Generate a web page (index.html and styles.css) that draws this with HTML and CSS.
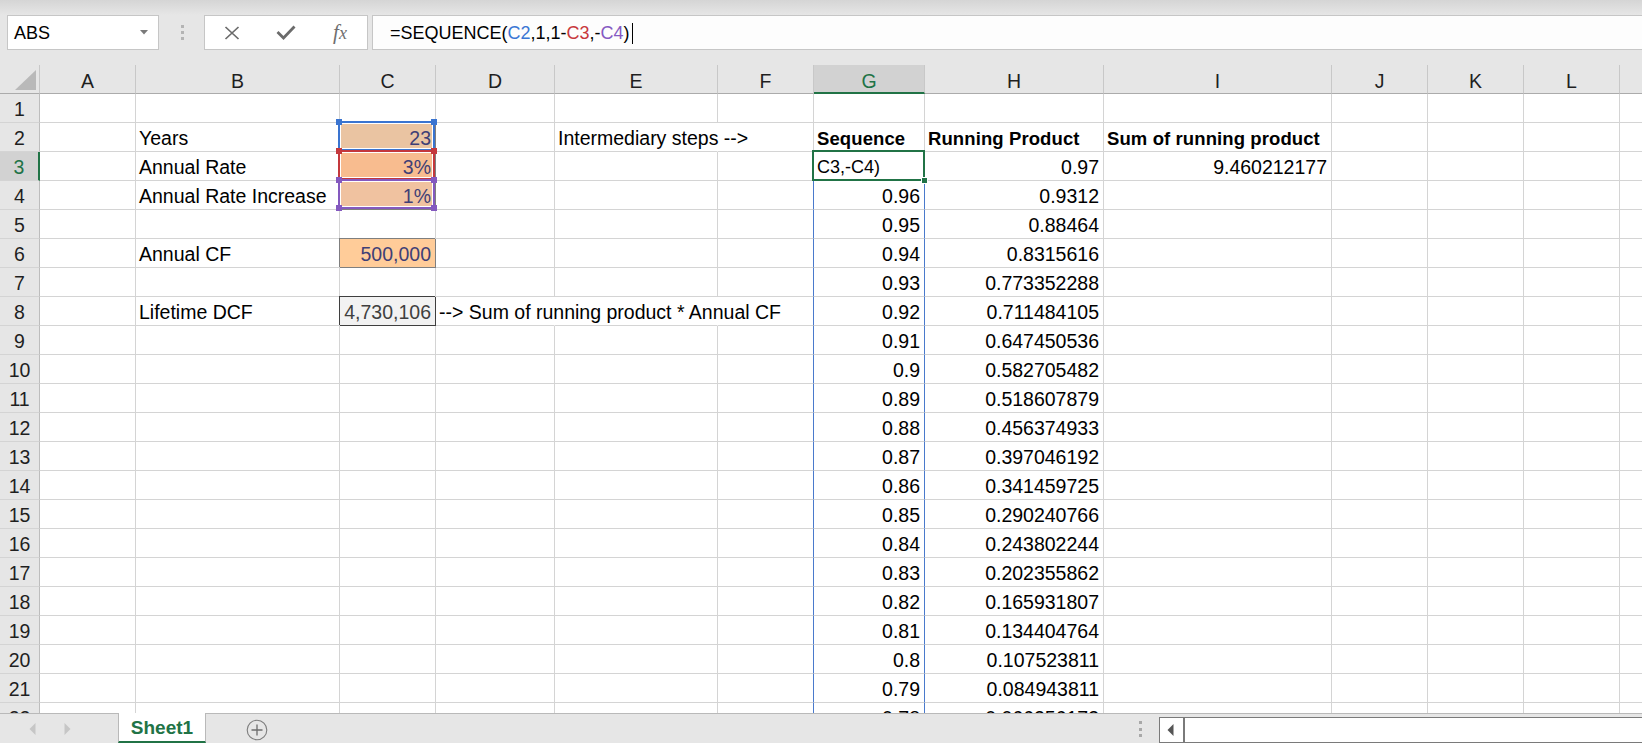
FILE: index.html
```html
<!DOCTYPE html>
<html>
<head>
<meta charset="utf-8">
<title>Excel - SEQUENCE</title>
<link rel="stylesheet" href="styles.css">
</head>
<body>
<div class="topband"></div>
<div class="fbar">
  <div class="namebox"><span>ABS</span><svg class="dd" width="8" height="5" viewBox="0 0 8 5"><polygon points="0,0 8,0 4,4.5" fill="#7a7a7a"/></svg></div>
  <div class="grip"><i></i><i></i><i></i></div>
  <div class="btns">
    <div class="btn"><svg width="16" height="14" viewBox="0 0 16 14"><path d="M1.5 1L14.5 13M14.5 1L1.5 13" stroke="#6b6b6b" stroke-width="1.7" fill="none"/></svg></div>
    <div class="btn"><svg width="20" height="15" viewBox="0 0 20 15"><path d="M1.5 7L7.5 13L18.5 1.5" stroke="#6b6b6b" stroke-width="2.8" fill="none"/></svg></div>
    <div class="btn"><span class="fx">f<span class="fxx">x</span></span></div>
  </div>
  <div class="formula">=SEQUENCE(<span class="fb">C2</span>,1,1-<span class="fr">C3</span>,-<span class="fp">C4</span>)<span class="caret"></span></div>
</div>

<div class="sheet">
  <div class="corner"><svg width="39" height="28" viewBox="0 0 39 28"><polygon points="15,25 36,5 36,25" fill="#b9b9b9"/></svg></div>
  <div class="ch">A</div><div class="ch">B</div><div class="ch">C</div><div class="ch">D</div><div class="ch">E</div><div class="ch">F</div><div class="ch sel">G</div><div class="ch">H</div><div class="ch">I</div><div class="ch">J</div><div class="ch">K</div><div class="ch">L</div><div class="ch"></div>

  <div class="rh">1</div><div class="c"></div><div class="c"></div><div class="c"></div><div class="c"></div><div class="c"></div><div class="c"></div><div class="c"></div><div class="c"></div><div class="c"></div><div class="c"></div><div class="c"></div><div class="c"></div><div class="c"></div>

  <div class="rh">2</div><div class="c"></div><div class="c">Years</div><div class="c n inp t1 rel">23<span class="ref rb"><i class="tl"></i><i class="tr"></i></span></div><div class="c"></div><div class="c nb">Intermediary steps --&gt;</div><div class="c"></div><div class="c b">Sequence</div><div class="c b">Running Product</div><div class="c b">Sum of running product</div><div class="c"></div><div class="c"></div><div class="c"></div><div class="c"></div>

  <div class="rh sel">3</div><div class="c"></div><div class="c">Annual Rate</div><div class="c n inp t2 rel">3%<span class="ref rr"><i class="tl"></i><i class="tr"></i></span></div><div class="c"></div><div class="c"></div><div class="c sf"></div><div class="c sg edit rel">C3,-C4)<span class="selbox"><i class="fh"></i></span></div><div class="c n">0.97</div><div class="c n">9.460212177</div><div class="c"></div><div class="c"></div><div class="c"></div><div class="c"></div>

  <div class="rh">4</div><div class="c"></div><div class="c">Annual Rate Increase</div><div class="c n inp t3 rel">1%<span class="ref rp"><i class="tl"></i><i class="tr"></i><i class="bl"></i><i class="br"></i></span></div><div class="c"></div><div class="c"></div><div class="c sf"></div><div class="c sg n">0.96</div><div class="c n">0.9312</div><div class="c"></div><div class="c"></div><div class="c"></div><div class="c"></div><div class="c"></div>

  <div class="rh">5</div><div class="c"></div><div class="c"></div><div class="c"></div><div class="c"></div><div class="c"></div><div class="c sf"></div><div class="c sg n">0.95</div><div class="c n">0.88464</div><div class="c"></div><div class="c"></div><div class="c"></div><div class="c"></div><div class="c"></div>

  <div class="rh">6</div><div class="c"></div><div class="c">Annual CF</div><div class="c n inp">500,000</div><div class="c"></div><div class="c"></div><div class="c sf"></div><div class="c sg n">0.94</div><div class="c n">0.8315616</div><div class="c"></div><div class="c"></div><div class="c"></div><div class="c"></div><div class="c"></div>

  <div class="rh">7</div><div class="c"></div><div class="c"></div><div class="c"></div><div class="c"></div><div class="c"></div><div class="c sf"></div><div class="c sg n">0.93</div><div class="c n">0.773352288</div><div class="c"></div><div class="c"></div><div class="c"></div><div class="c"></div><div class="c"></div>

  <div class="rh">8</div><div class="c"></div><div class="c">Lifetime DCF</div><div class="c n out">4,730,106</div><div class="c nb">--&gt; Sum of running product * Annual CF</div><div class="c nb"></div><div class="c sf"></div><div class="c sg n">0.92</div><div class="c n">0.711484105</div><div class="c"></div><div class="c"></div><div class="c"></div><div class="c"></div><div class="c"></div>

  <div class="rh">9</div><div class="c"></div><div class="c"></div><div class="c"></div><div class="c"></div><div class="c"></div><div class="c sf"></div><div class="c sg n">0.91</div><div class="c n">0.647450536</div><div class="c"></div><div class="c"></div><div class="c"></div><div class="c"></div><div class="c"></div>

  <div class="rh">10</div><div class="c"></div><div class="c"></div><div class="c"></div><div class="c"></div><div class="c"></div><div class="c sf"></div><div class="c sg n">0.9</div><div class="c n">0.582705482</div><div class="c"></div><div class="c"></div><div class="c"></div><div class="c"></div><div class="c"></div>

  <div class="rh">11</div><div class="c"></div><div class="c"></div><div class="c"></div><div class="c"></div><div class="c"></div><div class="c sf"></div><div class="c sg n">0.89</div><div class="c n">0.518607879</div><div class="c"></div><div class="c"></div><div class="c"></div><div class="c"></div><div class="c"></div>

  <div class="rh">12</div><div class="c"></div><div class="c"></div><div class="c"></div><div class="c"></div><div class="c"></div><div class="c sf"></div><div class="c sg n">0.88</div><div class="c n">0.456374933</div><div class="c"></div><div class="c"></div><div class="c"></div><div class="c"></div><div class="c"></div>

  <div class="rh">13</div><div class="c"></div><div class="c"></div><div class="c"></div><div class="c"></div><div class="c"></div><div class="c sf"></div><div class="c sg n">0.87</div><div class="c n">0.397046192</div><div class="c"></div><div class="c"></div><div class="c"></div><div class="c"></div><div class="c"></div>

  <div class="rh">14</div><div class="c"></div><div class="c"></div><div class="c"></div><div class="c"></div><div class="c"></div><div class="c sf"></div><div class="c sg n">0.86</div><div class="c n">0.341459725</div><div class="c"></div><div class="c"></div><div class="c"></div><div class="c"></div><div class="c"></div>

  <div class="rh">15</div><div class="c"></div><div class="c"></div><div class="c"></div><div class="c"></div><div class="c"></div><div class="c sf"></div><div class="c sg n">0.85</div><div class="c n">0.290240766</div><div class="c"></div><div class="c"></div><div class="c"></div><div class="c"></div><div class="c"></div>

  <div class="rh">16</div><div class="c"></div><div class="c"></div><div class="c"></div><div class="c"></div><div class="c"></div><div class="c sf"></div><div class="c sg n">0.84</div><div class="c n">0.243802244</div><div class="c"></div><div class="c"></div><div class="c"></div><div class="c"></div><div class="c"></div>

  <div class="rh">17</div><div class="c"></div><div class="c"></div><div class="c"></div><div class="c"></div><div class="c"></div><div class="c sf"></div><div class="c sg n">0.83</div><div class="c n">0.202355862</div><div class="c"></div><div class="c"></div><div class="c"></div><div class="c"></div><div class="c"></div>

  <div class="rh">18</div><div class="c"></div><div class="c"></div><div class="c"></div><div class="c"></div><div class="c"></div><div class="c sf"></div><div class="c sg n">0.82</div><div class="c n">0.165931807</div><div class="c"></div><div class="c"></div><div class="c"></div><div class="c"></div><div class="c"></div>

  <div class="rh">19</div><div class="c"></div><div class="c"></div><div class="c"></div><div class="c"></div><div class="c"></div><div class="c sf"></div><div class="c sg n">0.81</div><div class="c n">0.134404764</div><div class="c"></div><div class="c"></div><div class="c"></div><div class="c"></div><div class="c"></div>

  <div class="rh">20</div><div class="c"></div><div class="c"></div><div class="c"></div><div class="c"></div><div class="c"></div><div class="c sf"></div><div class="c sg n">0.8</div><div class="c n">0.107523811</div><div class="c"></div><div class="c"></div><div class="c"></div><div class="c"></div><div class="c"></div>

  <div class="rh">21</div><div class="c"></div><div class="c"></div><div class="c"></div><div class="c"></div><div class="c"></div><div class="c sf"></div><div class="c sg n">0.79</div><div class="c n">0.084943811</div><div class="c"></div><div class="c"></div><div class="c"></div><div class="c"></div><div class="c"></div>

  <div class="rh">22</div><div class="c"></div><div class="c"></div><div class="c"></div><div class="c"></div><div class="c"></div><div class="c sf"></div><div class="c sg n">0.78</div><div class="c n">0.066256173</div><div class="c"></div><div class="c"></div><div class="c"></div><div class="c"></div><div class="c"></div>
</div>

<div class="tabs">
  <div class="nav">
    <svg width="7" height="12" viewBox="0 0 7 12"><polygon points="6.5,0 0.5,6 6.5,12" fill="#c6c6c6"/></svg>
    <svg width="7" height="12" viewBox="0 0 7 12"><polygon points="0.5,0 6.5,6 0.5,12" fill="#c6c6c6"/></svg>
  </div>
  <div class="tab">Sheet1</div>
  <div class="add"><svg width="22" height="22" viewBox="0 0 22 22"><circle cx="11" cy="11" r="9.8" fill="none" stroke="#7d7d7d" stroke-width="1.1"/><path d="M11 5.5V16.5M5.5 11H16.5" stroke="#6d6d6d" stroke-width="1.3"/></svg></div>
  <div class="hgrip"><i></i><i></i><i></i></div>
  <div class="hscroll"><div class="hbtn"><svg width="7" height="12" viewBox="0 0 7 12"><polygon points="6.5,0 0.5,6 6.5,12" fill="#555"/></svg></div></div>
</div>
</body>
</html>
```
FILE: styles.css
```css
* { box-sizing: border-box; }
html, body { margin: 0; padding: 0; }
body {
  width: 1642px;
  height: 743px;
  overflow: hidden;
  background: #e6e6e6;
  font-family: "Liberation Sans", Arial, sans-serif;
  color: #000;
}

/* top strip */
.topband { height: 15px; background: linear-gradient(#d5d5d5, #e6e6e6); }

/* formula bar */
.fbar { display: flex; height: 35px; margin-bottom: 15px; padding-left: 7px; }
.namebox {
  width: 152px; background: #fff; border: 1px solid #c6c6c6;
  display: flex; align-items: center; justify-content: space-between;
  padding: 2px 10px 0 6px; font-size: 18px;
}
.namebox .dd { margin-top: -2px; }
.grip { width: 45px; display: flex; flex-direction: column; align-items: center; justify-content: center; gap: 3px; padding-left: 2px; }
.grip i { display: block; width: 3px; height: 3px; background: #b4b4b4; }
.btns { width: 164px; background: #fff; border: 1px solid #c6c6c6; display: flex; }
.btn { width: 54px; display: flex; align-items: center; justify-content: center; }
.fx { font-family: "Liberation Serif", "Times New Roman", serif; font-style: italic; font-size: 21px; color: #6f6f6f; margin-top: -1px; }
.fxx { font-size: 18px; }
.formula {
  flex: 1; margin-left: 4px; background: #fdfdfd; border: 1px solid #c6c6c6; border-right: none;
  padding: 2px 0 0 17px; font-size: 18px; line-height: 31px; white-space: nowrap;
}
.fb { color: #3a76d4; }
.fr { color: #c8383c; }
.fp { color: #8559c2; }
.caret { display: inline-block; width: 1px; height: 21px; background: #000; margin-left: 2px; vertical-align: -5px; }

/* sheet grid */
.sheet {
  display: grid;
  grid-template-columns: 40px 96px 204px 96px 119px 163px 96px 111px 179px 228px 96px 96px 96px 96px;
  grid-auto-rows: 29px;
  height: 648px;
  overflow: hidden;
  background: #fff;
  width: 1642px;
}
.corner { background: #e6e6e6; border-right: 1px solid #c8c8c8; border-bottom: 1px solid #ababab; }
.corner svg { display: block; }
.ch {
  background: #e6e6e6; border-right: 1px solid #c8c8c8; border-bottom: 1px solid #ababab;
  text-align: center; font-size: 19.5px; line-height: 27px; padding-top: 3px; color: #1f1f1f;
}
.ch.sel { background: #d2d2d2; color: #217346; border-bottom: 2px solid #217346; }
.rh {
  background: #e6e6e6; border-right: 1px solid #bdbdbd; border-bottom: 1px solid #d4d4d4;
  text-align: center; font-size: 19.5px; line-height: 27px; padding-top: 2px; color: #1f1f1f;
}
.rh.sel { background: #d2d2d2; color: #217346; border-right: 2px solid #217346; }
.c {
  border-right: 1px solid #d4d4d4; border-bottom: 1px solid #d4d4d4;
  padding: 2px 4px 0 3px; font-size: 19.5px; line-height: 27px; white-space: nowrap;
}
.n { text-align: right; }
.b { font-weight: bold; font-size: 18.5px; letter-spacing: 0.1px; }
.nb { border-right-color: transparent; }
.sf, .sg { border-right-color: #4a7acc; }
.rel { position: relative; }

/* Input / Output styles */
.inp { background: #ffcc99; color: #3f3f76; border-right-color: #7f7f7f; border-bottom-color: #7f7f7f; box-shadow: -1px -1px 0 #7f7f7f; }
.inp.t1 { background: #eac4a2; }
.inp.t2 { background: #f8bc8f; }
.inp.t3 { background: #f0c2a0; }
.out { background: #f2f2f2; color: #3f3f3f; border-right-color: #3f3f3f; border-bottom-color: #3f3f3f; box-shadow: -1px -1px 0 #3f3f3f; }

/* formula reference highlight boxes */
.ref { position: absolute; top: -2px; left: -2px; right: 0; bottom: 0; border: 2px solid; box-shadow: inset 0 0 0 1px #fff; }
.ref i { position: absolute; width: 6px; height: 6px; background: currentColor; }
.ref .tl { left: -4px; top: -4px; }
.ref .tr { right: -4px; top: -4px; }
.ref .bl { left: -4px; bottom: -4px; }
.ref .br { right: -4px; bottom: -4px; }
.rb { color: #3a74d0; }
.rr { color: #c4383c; }
.rp { color: #8459bf; }

/* active (editing) cell */
.edit { background: #fff; font-size: 18px; }
.selbox { position: absolute; top: -2px; left: -2px; right: -1px; bottom: -1px; border: 2px solid #217346; }
.fh { position: absolute; right: -5px; bottom: -5px; width: 7px; height: 7px; background: #217346; border: 1px solid #fff; }

/* sheet tabs */
.tabs { display: flex; height: 30px; border-top: 1px solid #b9b9b9; background: #e6e6e6; }
.nav { width: 118px; display: flex; align-items: center; gap: 28px; padding: 1px 0 0 29px; }
.nav svg { display: block; }
.tab {
  width: 88px; height: 30px; margin-top: -1px; background: #fff;
  border-left: 1px solid #b9b9b9; border-right: 1px solid #b9b9b9; border-bottom: 2px solid #217346;
  color: #217346; font-weight: bold; font-size: 19px; text-align: center; line-height: 26px; padding-top: 2px;
}
.add { margin-left: 40px; display: flex; align-items: center; padding-top: 2px; }
.add svg { display: block; }
.hgrip { margin-left: auto; width: 20px; display: flex; flex-direction: column; align-items: center; justify-content: center; gap: 3.5px; padding-top: 1px; }
.hgrip i { display: block; width: 3px; height: 3px; background: #a8a8a8; }
.hscroll { width: 483px; margin-left: 9px; margin-top: 3px; height: 26px; background: #fff; border: 1px solid #7a7a7a; border-right: none; display: flex; }
.hbtn { width: 25px; border-right: 2px solid #7a7a7a; display: flex; align-items: center; justify-content: center; padding-right: 2px; }
.hbtn svg { display: block; }
```
